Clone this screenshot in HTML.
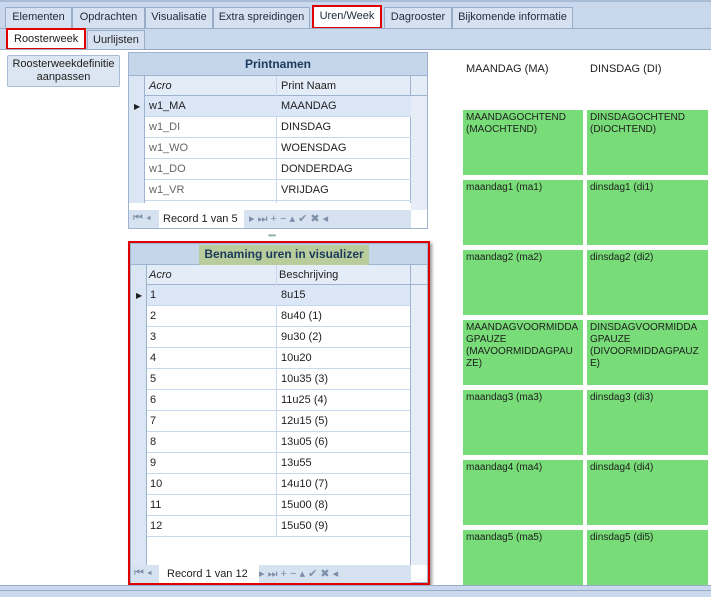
<!DOCTYPE html><html><head><style>
*{margin:0;padding:0;box-sizing:border-box}
body{width:711px;height:597px;position:relative;overflow:hidden;background:#fff;font-family:"Liberation Sans",sans-serif;font-size:11px;color:#1e1e1e}
.a{position:absolute;white-space:nowrap}
.tab{position:absolute;top:7px;height:21px;background:#d5e1f0;border:1px solid #98acc8;border-bottom:none;padding:3px 0 0;text-align:center;color:#1e2a3a}
.g{position:absolute;background:#78dc78;padding:2px 3px;font-size:10px;line-height:12px;color:#1e1e1e;white-space:nowrap;overflow:hidden}
.grid{position:absolute;background:#fff;border:1px solid #9db3d0}
.hd{position:absolute;left:0;right:0;top:0;background:#c5d5ea;font-weight:bold;text-align:center;color:#1c3a5c;font-size:12px}
.row{position:absolute;left:0;width:282px;height:21px;border-bottom:1px solid #c7d8ee}
.row span{position:absolute;top:4px}
.ind{position:absolute;left:0;width:16px;background:#dbe6f4;border-right:1px solid #9db3d0}
.nav{position:absolute;left:0;right:0;background:#d7e2f0;color:#7c8ea8;font-size:11px;white-space:nowrap}
</style></head><body>
<div class="a" style="left:0;top:0;width:711px;height:50px;background:#c9d8ec"></div>
<div class="a" style="left:0;top:0;width:711px;height:2px;background:#a9bcd6"></div>
<div class="tab" style="left:5px;width:67px">Elementen</div>
<div class="tab" style="left:72px;width:73px">Opdrachten</div>
<div class="tab" style="left:145px;width:68px">Visualisatie</div>
<div class="tab" style="left:213px;width:97px">Extra spreidingen</div>
<div class="tab" style="left:312px;width:70px;top:5px;height:24px;background:#fff;border:2px solid #e00000">Uren/Week</div>
<div class="tab" style="left:384px;width:68px">Dagrooster</div>
<div class="tab" style="left:452px;width:121px">Bijkomende informatie</div>
<div class="a" style="left:0;top:28px;width:711px;height:1px;background:#98acc8"></div>
<div class="a" style="left:6px;top:28px;width:80px;height:22px;background:#fff;border:2px solid #e00000;padding:3px 0 0 6px">Roosterweek</div>
<div class="a" style="left:87px;top:30px;width:58px;height:20px;background:#d5e1f0;border:1px solid #98acc8;border-bottom:none;padding:3px 0 0 5px">Uurlijsten</div>
<div class="a" style="left:0;top:49px;width:711px;height:1px;background:#98acc8"></div>
<div class="a" style="left:7px;top:55px;width:113px;height:32px;background:#dce6f3;border:1px solid #a9bcd6;border-radius:2px;text-align:center;line-height:13px;padding-top:2px">Roosterweekdefinitie<br>aanpassen</div>

<div class="grid" style="left:128px;top:52px;width:300px;height:177px">
<div class="hd" style="height:23px;line-height:22px;border-bottom:1px solid #9db3d0">Printnamen</div>
<div class="a" style="left:0;top:23px;width:298px;height:20px;background:#e4ecf7;border-bottom:1px solid #9db3d0"></div>
<div class="a" style="left:20px;top:27px;font-style:italic">Acro</div>
<div class="a" style="left:152px;top:27px">Print Naam</div>
<div class="ind" style="top:23px;height:127px"></div>
<div class="a" style="left:147px;top:23px;width:1px;height:127px;background:#c7d8ee"></div>
<div class="a" style="left:281px;top:23px;width:1px;height:127px;background:#9db3d0"></div>
<div class="a" style="left:282px;top:43px;width:16px;height:114px;background:#e6edf7"></div>
<div class="row" style="top:43px;left:16px;width:266px;background:#dbe7f7"><span style="left:4px">w1_MA</span><span style="left:136px">MAANDAG</span></div>
<div class="a" style="left:5px;top:49px;font-size:8px">▶</div>
<div class="row" style="top:64px;left:16px;width:266px;color:#666"><span style="left:4px">w1_DI</span><span style="left:136px;color:#1e1e1e">DINSDAG</span></div>
<div class="row" style="top:85px;left:16px;width:266px;color:#666"><span style="left:4px">w1_WO</span><span style="left:136px;color:#1e1e1e">WOENSDAG</span></div>
<div class="row" style="top:106px;left:16px;width:266px;color:#666"><span style="left:4px">w1_DO</span><span style="left:136px;color:#1e1e1e">DONDERDAG</span></div>
<div class="row" style="top:127px;left:16px;width:266px;color:#666"><span style="left:4px">w1_VR</span><span style="left:136px;color:#1e1e1e">VRIJDAG</span></div>
<div class="nav" style="top:157px;height:18px;width:282px"><span class="a" style="left:4px;top:2px">⏮ ◂</span><span class="a" style="left:30px;top:0;height:18px;background:#fff;padding:3px 4px;color:#1e1e1e;width:85px">Record 1 van 5</span><span class="a" style="left:120px;top:2px">▸ ⏭ + − ▴ ✔ ✖ ◂</span></div>
</div>
<div class="a" style="left:268px;top:231px;color:#8aa;font-size:8px;letter-spacing:-1px">••••</div>

<div class="a" style="left:128px;top:241px;width:302px;height:344px;border:2px solid #e00000;box-shadow:2px 2px 3px #999"></div>
<div class="grid" style="left:130px;top:243px;width:298px;height:340px">
<div class="hd" style="height:21px;border-bottom:1px solid #9db3d0"></div>
<div class="a" style="left:68px;top:1px;width:170px;height:20px;background:#b8cc9c;font-weight:bold;text-align:center;line-height:19px;color:#1c3a5c;font-size:12px">Benaming uren in visualizer</div>
<div class="a" style="left:0;top:21px;width:296px;height:20px;background:#e4ecf7;border-bottom:1px solid #9db3d0"></div>
<div class="a" style="left:18px;top:25px;font-style:italic">Acro</div>
<div class="a" style="left:148px;top:25px">Beschrijving</div>
<div class="ind" style="top:21px;height:300px"></div>
<div class="a" style="left:145px;top:21px;width:1px;height:272px;background:#c7d8ee"></div>
<div class="a" style="left:279px;top:21px;width:1px;height:300px;background:#9db3d0"></div>
<div class="a" style="left:280px;top:41px;width:16px;height:280px;background:#e6edf7"></div>
<div class="a" style="left:5px;top:47px;font-size:8px">▶</div>
<div class="row" style="top:41px;left:16px;width:263px;background:#dbe7f7"><span style="left:3px">1</span><span style="left:134px">8u15</span></div>
<div class="row" style="top:62px;left:16px;width:263px"><span style="left:3px">2</span><span style="left:134px">8u40 (1)</span></div>
<div class="row" style="top:83px;left:16px;width:263px"><span style="left:3px">3</span><span style="left:134px">9u30 (2)</span></div>
<div class="row" style="top:104px;left:16px;width:263px"><span style="left:3px">4</span><span style="left:134px">10u20</span></div>
<div class="row" style="top:125px;left:16px;width:263px"><span style="left:3px">5</span><span style="left:134px">10u35 (3)</span></div>
<div class="row" style="top:146px;left:16px;width:263px"><span style="left:3px">6</span><span style="left:134px">11u25 (4)</span></div>
<div class="row" style="top:167px;left:16px;width:263px"><span style="left:3px">7</span><span style="left:134px">12u15 (5)</span></div>
<div class="row" style="top:188px;left:16px;width:263px"><span style="left:3px">8</span><span style="left:134px">13u05 (6)</span></div>
<div class="row" style="top:209px;left:16px;width:263px"><span style="left:3px">9</span><span style="left:134px">13u55</span></div>
<div class="row" style="top:230px;left:16px;width:263px"><span style="left:3px">10</span><span style="left:134px">14u10 (7)</span></div>
<div class="row" style="top:251px;left:16px;width:263px"><span style="left:3px">11</span><span style="left:134px">15u00 (8)</span></div>
<div class="row" style="top:272px;left:16px;width:263px"><span style="left:3px">12</span><span style="left:134px">15u50 (9)</span></div>
<div class="nav" style="top:321px;height:18px;width:280px"><span class="a" style="left:3px;top:2px">⏮ ◂</span><span class="a" style="left:28px;top:0;height:18px;background:#fff;padding:3px 8px;color:#1e1e1e;width:100px">Record 1 van 12</span><span class="a" style="left:128px;top:2px">▸ ⏭ + − ▴ ✔ ✖ ◂</span></div>
</div>

<div class="a" style="left:466px;top:63px">MAANDAG (MA)</div>
<div class="a" style="left:590px;top:63px">DINSDAG (DI)</div>
<div class="g" style="left:463px;top:110px;width:120px;height:65px">MAANDAGOCHTEND<br>(MAOCHTEND)</div>
<div class="g" style="left:587px;top:110px;width:121px;height:65px">DINSDAGOCHTEND<br>(DIOCHTEND)</div>
<div class="g" style="left:463px;top:180px;width:120px;height:65px">maandag1 (ma1)</div>
<div class="g" style="left:587px;top:180px;width:121px;height:65px">dinsdag1 (di1)</div>
<div class="g" style="left:463px;top:250px;width:120px;height:65px">maandag2 (ma2)</div>
<div class="g" style="left:587px;top:250px;width:121px;height:65px">dinsdag2 (di2)</div>
<div class="g" style="left:463px;top:320px;width:120px;height:65px">MAANDAGVOORMIDDA<br>GPAUZE<br>(MAVOORMIDDAGPAU<br>ZE)</div>
<div class="g" style="left:587px;top:320px;width:121px;height:65px">DINSDAGVOORMIDDA<br>GPAUZE<br>(DIVOORMIDDAGPAUZ<br>E)</div>
<div class="g" style="left:463px;top:390px;width:120px;height:65px">maandag3 (ma3)</div>
<div class="g" style="left:587px;top:390px;width:121px;height:65px">dinsdag3 (di3)</div>
<div class="g" style="left:463px;top:460px;width:120px;height:65px">maandag4 (ma4)</div>
<div class="g" style="left:587px;top:460px;width:121px;height:65px">dinsdag4 (di4)</div>
<div class="g" style="left:463px;top:530px;width:120px;height:55px">maandag5 (ma5)</div>
<div class="g" style="left:587px;top:530px;width:121px;height:55px">dinsdag5 (di5)</div>
<div class="a" style="left:0;top:585px;width:711px;height:12px;background:#c9d8ec;border-top:1px solid #98acc8"></div>
<div class="a" style="left:0;top:590px;width:711px;height:1px;background:#98acc8"></div>
</body></html>
